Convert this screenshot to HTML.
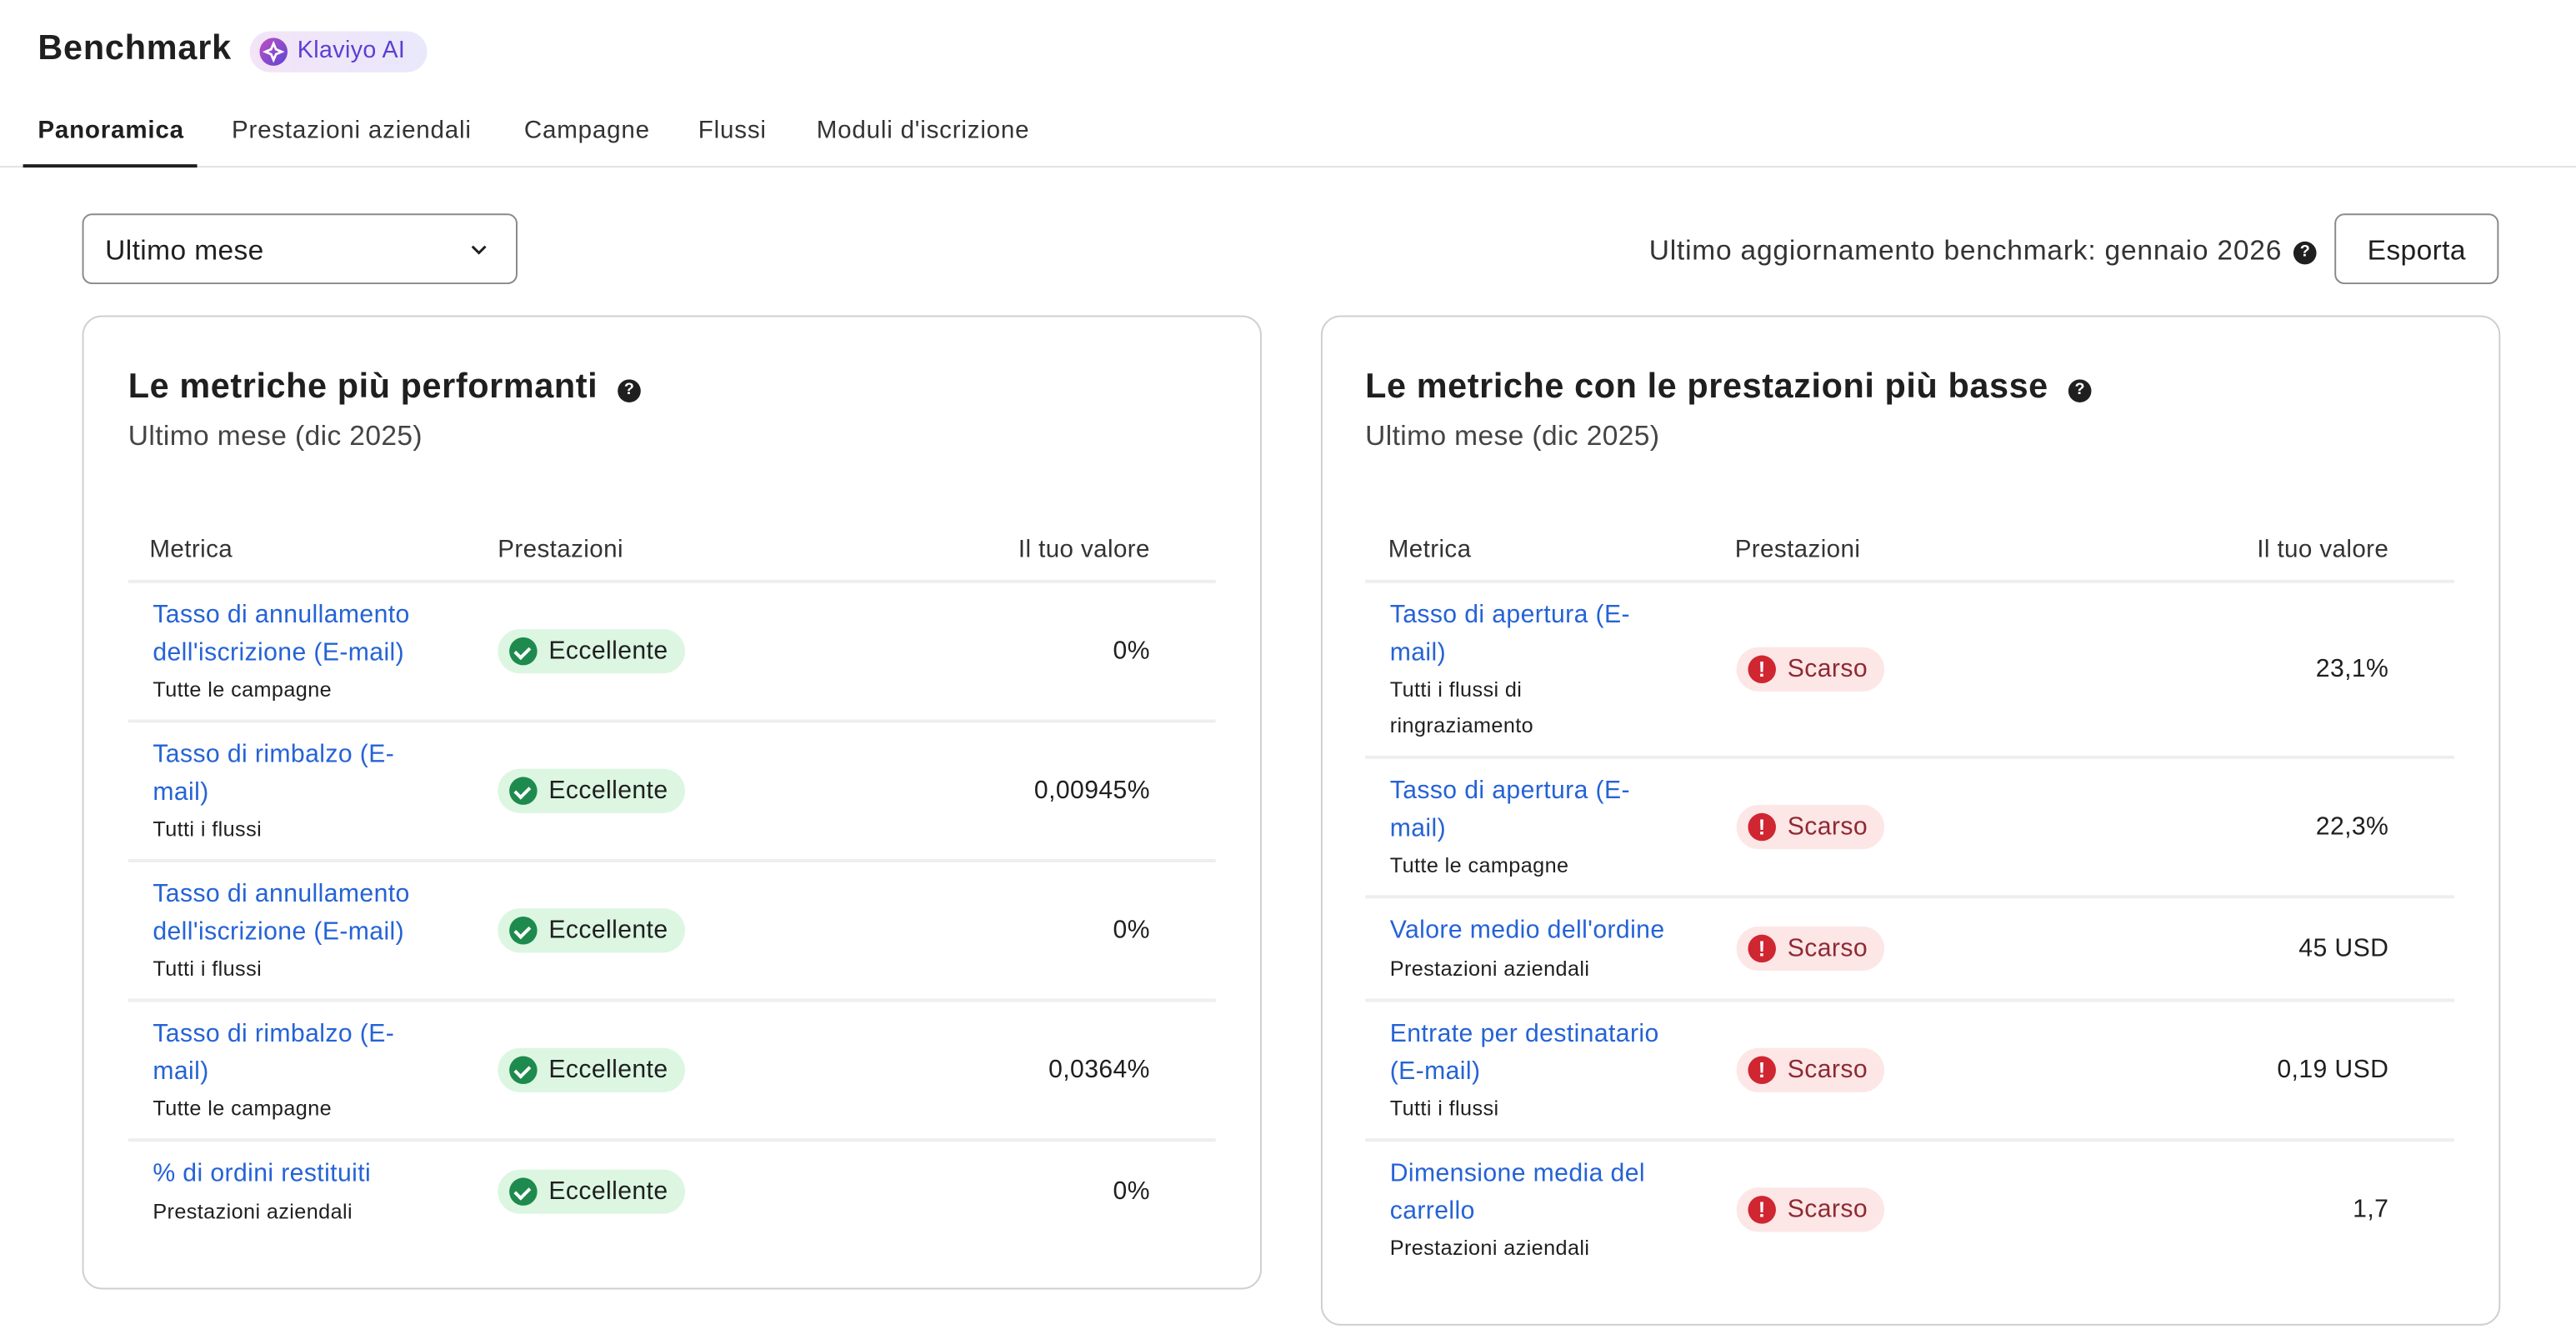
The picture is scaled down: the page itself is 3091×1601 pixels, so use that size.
<!DOCTYPE html>
<html><head><meta charset="utf-8"><style>
html,body{margin:0;padding:0;background:#fff;}
body{width:3091px;height:1600px;overflow:hidden;}
#w{position:absolute;left:0;top:0;width:1568px;height:812px;transform:scale(1.9713);transform-origin:0 0;font-family:"Liberation Sans",Arial,sans-serif;color:#1f1f1f;letter-spacing:0.2px;}
.a{position:absolute;white-space:nowrap;}
.card{position:absolute;border:1px solid #cfcfcf;border-radius:12px;background:#fff;}
.q{display:inline-block;width:14px;height:14px;border-radius:50%;background:#1f1f1f;color:#fff;font-size:10px;font-weight:700;text-align:center;line-height:14px;vertical-align:2px;letter-spacing:0;}
.hl{position:absolute;height:2px;background:#eeeeee;}
.lk{color:#2563d6;font-size:15.3px;line-height:22.5px;}
.sb{font-size:12.8px;line-height:22px;color:#1f1f1f;}
.bd{position:absolute;height:27px;border-radius:14px;font-size:15.3px;line-height:27px;padding:0 10px 0 31px;box-sizing:border-box;}
.bd i{position:absolute;left:7px;top:5px;width:17px;height:17px;border-radius:50%;}
.g{background:#dcf6e2;color:#1f1f1f;}
.g i{background:#1e8a4e;}
.r{background:#fde6e6;color:#8e2a33;}
.r i{background:#d02631;color:#fff;font-style:normal;font-weight:700;font-size:13px;line-height:17px;text-align:center;}
.v{position:absolute;font-size:15.3px;text-align:right;}
.th{position:absolute;font-size:15px;color:#333;}
.tab{position:absolute;top:71px;font-size:15px;color:#333;letter-spacing:0.4px;}
.ttl{position:absolute;top:224px;font-size:21px;font-weight:600;white-space:nowrap;letter-spacing:0.3px;}
.st{position:absolute;top:256px;font-size:17px;color:#444;white-space:nowrap;}
</style></head><body><div id="w">
<div class="a" style="left:23px;top:18px;font-size:21px;font-weight:600;letter-spacing:0.4px;">Benchmark</div>
<div class="a" style="left:152px;top:19px;width:108px;height:25px;border-radius:13px;background:linear-gradient(90deg,#f3e4f7,#e9e8fb);"></div>
<div class="a" style="left:158px;top:23px;width:17px;height:17px;border-radius:50%;background:linear-gradient(135deg,#c04fbf,#5b46d6);"><svg width="17" height="17" viewBox="0 0 17 17"><path d="M8.5 3.5 L10 7 L13.5 8.5 L10 10 L8.5 13.5 L7 10 L3.5 8.5 L7 7Z" fill="none" stroke="#fff" stroke-width="1.4"/></svg></div>
<div class="a" style="left:181px;top:23px;font-size:14.5px;color:#5b3fd2;">Klaviyo AI</div>
<div class="tab" style="left:23px;font-weight:700;color:#1f1f1f;">Panoramica</div>
<div class="tab" style="left:141px;">Prestazioni aziendali</div>
<div class="tab" style="left:319px;">Campagne</div>
<div class="tab" style="left:425px;">Flussi</div>
<div class="tab" style="left:497px;">Moduli d'iscrizione</div>
<div class="a" style="left:0;top:101px;width:1568px;height:1px;background:#e2e2e2;"></div>
<div class="a" style="left:14px;top:100px;width:106px;height:2px;background:#1f1f1f;"></div>
<div class="a" style="left:50px;top:130px;width:265px;height:43px;border:1px solid #8a8a8a;border-radius:6px;box-sizing:border-box;"></div>
<div class="a" style="left:64px;top:143px;font-size:17px;">Ultimo mese</div>
<svg class="a" style="left:285px;top:146px" width="13" height="12" viewBox="0 0 13 12"><path d="M2.5 4 L6.5 8 L10.5 4" fill="none" stroke="#1f1f1f" stroke-width="1.5"/></svg>
<div class="a" style="right:179px;top:143px;font-size:17px;color:#333;letter-spacing:0.4px;">Ultimo aggiornamento benchmark: gennaio 2026</div>
<div class="a" style="left:1396px;top:145px;"><span class="q">?</span></div>
<div class="a" style="left:1421px;top:130px;width:100px;height:43px;border:1px solid #8a8a8a;border-radius:6px;box-sizing:border-box;font-size:17px;font-weight:500;text-align:center;line-height:43px;">Esporta</div>

<div class="card" style="left:50px;top:192px;width:716px;height:591px;"></div>
<div class="ttl" style="left:78px;">Le metriche più performanti <span class="q" style="margin-left:6px">?</span></div>
<div class="st" style="left:78px;">Ultimo mese (dic 2025)</div>
<div class="th" style="left:91px;top:326px;">Metrica</div>
<div class="th" style="left:303px;top:326px;">Prestazioni</div>
<div class="th" style="right:868px;top:326px;">Il tuo valore</div>
<div class="hl" style="left:78px;top:353px;width:662px;"></div>
<div class="hl" style="left:78px;top:438px;width:662px;"></div>
<div class="hl" style="left:78px;top:523px;width:662px;"></div>
<div class="hl" style="left:78px;top:608px;width:662px;"></div>
<div class="hl" style="left:78px;top:693px;width:662px;"></div>

<div class="a" style="left:93px;top:364px;"><div class="lk">Tasso di annullamento<br>dell'iscrizione (E-mail)</div><div class="sb">Tutte le campagne</div></div>
<div class="bd g" style="left:303px;top:383px;"><i></i>Eccellente</div><div class="v" style="right:868px;top:388px;">0%</div>
<div class="a" style="left:93px;top:449px;"><div class="lk">Tasso di rimbalzo (E-<br>mail)</div><div class="sb">Tutti i flussi</div></div>
<div class="bd g" style="left:303px;top:468px;"><i></i>Eccellente</div><div class="v" style="right:868px;top:473px;">0,00945%</div>
<div class="a" style="left:93px;top:534px;"><div class="lk">Tasso di annullamento<br>dell'iscrizione (E-mail)</div><div class="sb">Tutti i flussi</div></div>
<div class="bd g" style="left:303px;top:553px;"><i></i>Eccellente</div><div class="v" style="right:868px;top:558px;">0%</div>
<div class="a" style="left:93px;top:619px;"><div class="lk">Tasso di rimbalzo (E-<br>mail)</div><div class="sb">Tutte le campagne</div></div>
<div class="bd g" style="left:303px;top:638px;"><i></i>Eccellente</div><div class="v" style="right:868px;top:643px;">0,0364%</div>
<div class="a" style="left:93px;top:704px;"><div class="lk">% di ordini restituiti</div><div class="sb">Prestazioni aziendali</div></div>
<div class="bd g" style="left:303px;top:712px;"><i></i>Eccellente</div><div class="v" style="right:868px;top:717px;">0%</div>

<div class="card" style="left:804px;top:192px;width:716px;height:613px;"></div>
<div class="ttl" style="left:831px;">Le metriche con le prestazioni più basse <span class="q" style="margin-left:6px">?</span></div>
<div class="st" style="left:831px;">Ultimo mese (dic 2025)</div>
<div class="th" style="left:845px;top:326px;">Metrica</div>
<div class="th" style="left:1056px;top:326px;">Prestazioni</div>
<div class="th" style="right:114px;top:326px;">Il tuo valore</div>
<div class="hl" style="left:831px;top:353px;width:663px;"></div>
<div class="hl" style="left:831px;top:460px;width:663px;"></div>
<div class="hl" style="left:831px;top:545px;width:663px;"></div>
<div class="hl" style="left:831px;top:608px;width:663px;"></div>
<div class="hl" style="left:831px;top:693px;width:663px;"></div>

<div class="a" style="left:846px;top:364px;"><div class="lk">Tasso di apertura (E-<br>mail)</div><div class="sb">Tutti i flussi di<br>ringraziamento</div></div>
<div class="bd r" style="left:1057px;top:394px;"><i>!</i>Scarso</div><div class="v" style="right:114px;top:399px;">23,1%</div>
<div class="a" style="left:846px;top:471px;"><div class="lk">Tasso di apertura (E-<br>mail)</div><div class="sb">Tutte le campagne</div></div>
<div class="bd r" style="left:1057px;top:490px;"><i>!</i>Scarso</div><div class="v" style="right:114px;top:495px;">22,3%</div>
<div class="a" style="left:846px;top:556px;"><div class="lk">Valore medio dell'ordine</div><div class="sb">Prestazioni aziendali</div></div>
<div class="bd r" style="left:1057px;top:564px;"><i>!</i>Scarso</div><div class="v" style="right:114px;top:569px;">45 USD</div>
<div class="a" style="left:846px;top:619px;"><div class="lk">Entrate per destinatario<br>(E-mail)</div><div class="sb">Tutti i flussi</div></div>
<div class="bd r" style="left:1057px;top:638px;"><i>!</i>Scarso</div><div class="v" style="right:114px;top:643px;">0,19 USD</div>
<div class="a" style="left:846px;top:704px;"><div class="lk">Dimensione media del<br>carrello</div><div class="sb">Prestazioni aziendali</div></div>
<div class="bd r" style="left:1057px;top:723px;"><i>!</i>Scarso</div><div class="v" style="right:114px;top:728px;">1,7</div>
</div>
<style>.g i::after{content:"";position:absolute;left:5px;top:3.5px;width:4px;height:7px;border:solid #fff;border-width:0 2px 2px 0;transform:rotate(45deg);}</style>
</body></html>
